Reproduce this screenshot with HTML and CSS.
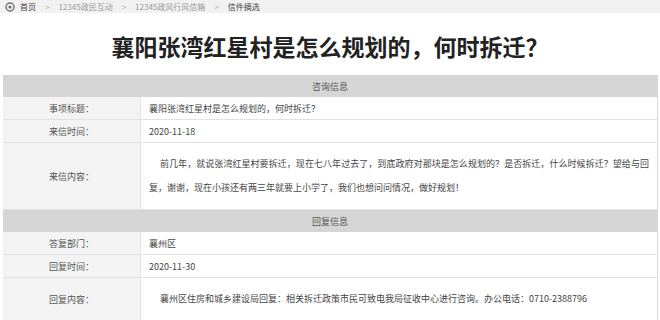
FILE: index.html
```html
<!DOCTYPE html>
<html lang="zh-CN">
<head>
<meta charset="UTF-8" />
<meta name="viewport" content="width=device-width, initial-scale=1" />
<title>信件摘选</title>
<link rel="stylesheet" href="styles.css">
</head>
<body>

<div class="crumbs">
  <svg class="crumb-icon" width="10" height="10" viewBox="0 0 10 10">
    <circle cx="5" cy="5" r="4" fill="none" stroke="#6f6f6f" stroke-width="1.4" />
    <circle cx="5" cy="5" r="1.6" fill="#6f6f6f" />
  </svg>
  <a class="home" href="#">首页</a>
  <span class="sep">&gt;</span>
  <a href="#">12345政民互动</a>
  <span class="sep">&gt;</span>
  <a href="#">12345政风行风信箱</a>
  <span class="sep">&gt;</span>
  <span class="current">信件摘选</span>
</div>

<h1 class="title">襄阳张湾红星村是怎么规划的，何时拆迁？</h1>

<div class="wrap">
  <table class="letter">
    <tr><th colspan="2">咨询信息</th></tr>
    <tr>
      <td class="label">事项标题：</td>
      <td>襄阳张湾红星村是怎么规划的，何时拆迁？</td>
    </tr>
    <tr>
      <td class="label">来信时间：</td>
      <td>2020-11-18</td>
    </tr>
    <tr>
      <td class="label">来信内容：</td>
      <td class="body">前几年，就说张湾红星村要拆迁，现在七八年过去了，到底政府对那块是怎么规划的？是否拆迁，什么时候拆迁？望给与回复，谢谢，现在小孩还有两三年就要上小学了，我们也想问问情况，做好规划！</td>
    </tr>
    <tr><th colspan="2">回复信息</th></tr>
    <tr>
      <td class="label">答复部门：</td>
      <td>襄州区</td>
    </tr>
    <tr>
      <td class="label">回复时间：</td>
      <td>2020-11-30</td>
    </tr>
    <tr>
      <td class="label">回复内容：</td>
      <td class="body reply">襄州区住房和城乡建设局回复：相关拆迁政策市民可致电我局征收中心进行咨询。办公电话：0710-2388796</td>
    </tr>
  </table>
</div>

</body>
</html>
```

FILE: styles.css
```css
body {
  margin: 0;
  background: #fff;
  color: #333;
  font-family: "Noto Sans CJK SC", "Noto Sans", sans-serif;
}
.crumbs {
  display: flex;
  align-items: center;
  height: 13px;
  padding-left: 5px;
  background: #f1f1f1;
  font-size: 8px;
  color: #9a9a9a;
}
.crumb-icon {
  margin-right: 5px;
}
.crumbs a {
  color: #9a9a9a;
  text-decoration: none;
}
.crumbs a.home,
.crumbs .current {
  color: #444;
}
.sep {
  margin: 0 9px;
  color: #aaa;
}
.title {
  margin: 0;
  height: 62px;
  line-height: 66px;
  text-align: center;
  font-size: 23px;
  font-weight: bold;
  color: #222;
}
.wrap {
  padding: 0 2px 0 3px;
}
.letter {
  width: 100%;
  border-collapse: collapse;
  font-size: 9px;
  border-right: 1px solid #d8d8d8;
}
.letter th {
  height: 22px;
  padding: 0;
  background: #d5d5d5;
  font-weight: normal;
  color: #555;
  text-align: center;
}
.letter td {
  height: 22px;
  padding: 0 8px;
  border-bottom: 1px solid #e2e2e2;
  color: #444;
}
.letter td.label {
  width: 121px;
  background: #f3f3f3;
  border-right: 1px solid #e2e2e2;
  text-align: center;
  color: #555;
}
.letter td.body {
  height: 48px;
  padding: 9px 8px;
  line-height: 24px;
  text-indent: 11px;
  text-align: justify;
}
.letter td.reply {
  height: 24px;
}
```
